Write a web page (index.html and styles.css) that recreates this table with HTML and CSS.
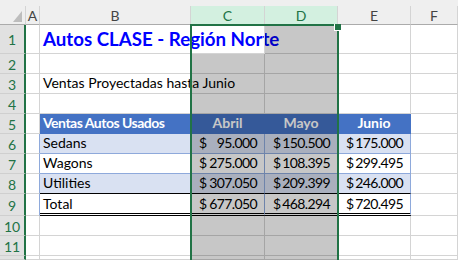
FILE: index.html
```html
<!DOCTYPE html>
<html lang="es">
<head>
<meta charset="utf-8">
<title>Autos CLASE</title>
<link rel="stylesheet" href="styles.css">
</head>
<body>
<div class="sheet">
  <div class="strip"></div>

  <div class="corner"></div>
  <div class="h">A</div>
  <div class="h">B</div>
  <div class="h sel">C</div>
  <div class="h sel">D</div>
  <div class="h">E</div>
  <div class="h">F</div>

  <div class="r">1</div><div class="c"></div><div class="c title">Autos CLASE - Región Norte</div><div class="c"></div><div class="c"></div><div class="c"></div><div class="c"></div>
  <div class="r">2</div><div class="c"></div><div class="c"></div><div class="c"></div><div class="c"></div><div class="c"></div><div class="c"></div>
  <div class="r">3</div><div class="c"></div><div class="c">Ventas Proyectadas hasta Junio</div><div class="c"></div><div class="c"></div><div class="c"></div><div class="c"></div>
  <div class="r">4</div><div class="c"></div><div class="c"></div><div class="c"></div><div class="c"></div><div class="c"></div><div class="c"></div>

  <div class="r">5</div><div class="c"></div><div class="c hd">Ventas Autos Usados</div><div class="c hd ctr">Abril</div><div class="c hd ctr">Mayo</div><div class="c hd ctr">Junio</div><div class="c"></div>

  <div class="r">6</div><div class="c tl"></div><div class="c tb band">Sedans</div><div class="c tb band num"><span>$</span><span class="v">95.000</span></div><div class="c tb band num"><span>$</span><span class="v">150.500</span></div><div class="c tb band num"><span>$</span><span class="v">175.000</span></div><div class="c"></div>
  <div class="r">7</div><div class="c tl"></div><div class="c tb">Wagons</div><div class="c tb num"><span>$</span><span class="v">275.000</span></div><div class="c tb num"><span>$</span><span class="v">108.395</span></div><div class="c tb num"><span>$</span><span class="v">299.495</span></div><div class="c"></div>
  <div class="r">8</div><div class="c tl"></div><div class="c tb band blk">Utilities</div><div class="c tb band blk num"><span>$</span><span class="v">307.050</span></div><div class="c tb band blk num"><span>$</span><span class="v">209.399</span></div><div class="c tb band blk num"><span>$</span><span class="v">246.000</span></div><div class="c"></div>
  <div class="r">9</div><div class="c tl"></div><div class="c tb tot">Total</div><div class="c tb tot num"><span>$</span><span class="v">677.050</span></div><div class="c tb tot num"><span>$</span><span class="v">468.294</span></div><div class="c tb tot num"><span>$</span><span class="v">720.495</span></div><div class="c"></div>

  <div class="r">10</div><div class="c"></div><div class="c"></div><div class="c"></div><div class="c"></div><div class="c"></div><div class="c"></div>
  <div class="r">11</div><div class="c"></div><div class="c"></div><div class="c"></div><div class="c"></div><div class="c"></div><div class="c"></div>
  <div class="r"></div><div class="c"></div><div class="c"></div><div class="c"></div><div class="c"></div><div class="c"></div><div class="c"></div>

  <div class="shade shade-c"></div>
  <div class="shade shade-d"></div>
  <div class="selbox"><div class="handle"></div></div>
</div>
</body>
</html>
```
FILE: styles.css
```css
* {
  box-sizing: border-box;
  margin: 0;
  padding: 0;
}

body {
  margin: 0;
  width: 458px;
  height: 260px;
  overflow: hidden;
  background: #ffffff;
  font-family: Lato, "Liberation Sans", sans-serif;
}

.sheet {
  position: relative;
  display: grid;
  width: 458px;
  height: 260px;
  grid-template-columns: 26px 14px 151px 74px 73px 73px 1fr;
  grid-template-rows: 6px 19px 29px repeat(7, 20px) 22px 20px 20px 1fr;
  overflow: hidden;
}

.strip {
  grid-column: 1 / -1;
  background: #efefef;
}

.corner {
  background: #efefef;
  border-right: 1px solid #d4d4d4;
  border-bottom: 1px solid #ababab;
  display: flex;
  justify-content: flex-end;
  align-items: flex-end;
  padding: 0 3px 2px 0;
}

.corner::after {
  content: "";
  width: 0;
  height: 0;
  border-left: 9px solid transparent;
  border-bottom: 11px solid #bdbdbd;
}

.h {
  background: #efefef;
  border-right: 1px solid #d4d4d4;
  border-bottom: 1px solid #ababab;
  display: flex;
  justify-content: center;
  align-items: center;
  color: #444444;
  font-size: 14px;
  line-height: 1;
  padding-top: 1px;
}

.h.sel {
  background: #d3f0e0;
  color: #217346;
  border-bottom-color: #217346;
}

.r {
  background: #e1e1e1;
  border-right: 2px solid #217346;
  border-bottom: 1px solid #cfcfcf;
  display: flex;
  justify-content: center;
  align-items: center;
  color: #217346;
  font-size: 14px;
  line-height: 1;
  padding-top: 2px;
}

.c {
  border-right: 1px solid #d4d4d4;
  border-bottom: 1px solid #d4d4d4;
  display: flex;
  align-items: flex-end;
  padding: 0 3px 3px 3px;
  white-space: nowrap;
  font-size: 14px;
  line-height: 1;
  color: #000000;
  min-width: 0;
}

.title {
  font-size: 18.7px;
  font-weight: bold;
  color: #0000ff;
  padding-bottom: 4px;
}

.hd {
  background: #4472c4;
  color: #ffffff;
  font-weight: bold;
  letter-spacing: -0.5px;
  border-right-color: #4472c4;
  border-bottom-color: #4472c4;
}

.ctr {
  justify-content: center;
  letter-spacing: 0;
}

.tb {
  border-right-color: #8ea9db;
  border-bottom-color: #8ea9db;
}

.tl {
  border-right-color: #8ea9db;
}

.band {
  background: #d9e1f2;
}

.num {
  justify-content: space-between;
  padding: 0 7px 3px 8px;
}

.v {
  letter-spacing: -0.6px;
}

.blk {
  border-bottom-color: #000000;
}

.tot {
  border-bottom: 3px double #000000;
  padding-bottom: 2px;
}

.shade {
  position: absolute;
  inset: 0;
  background: rgba(0, 0, 0, 0.22);
  pointer-events: none;
}

.shade-c {
  grid-area: 4 / 4 / 15 / 5;
}

.shade-d {
  grid-area: 3 / 5 / 15 / 6;
}

.selbox {
  position: absolute;
  grid-area: 3 / 4 / 15 / 6;
  top: -1px;
  left: -1px;
  right: -1px;
  bottom: 0;
  border: 2px solid #217346;
  border-bottom: none;
  pointer-events: none;
}

.handle {
  position: absolute;
  top: -2px;
  right: -4px;
  width: 7px;
  height: 7px;
  background: #217346;
  border-left: 1px solid #ffffff;
  border-bottom: 1px solid #ffffff;
}
```
